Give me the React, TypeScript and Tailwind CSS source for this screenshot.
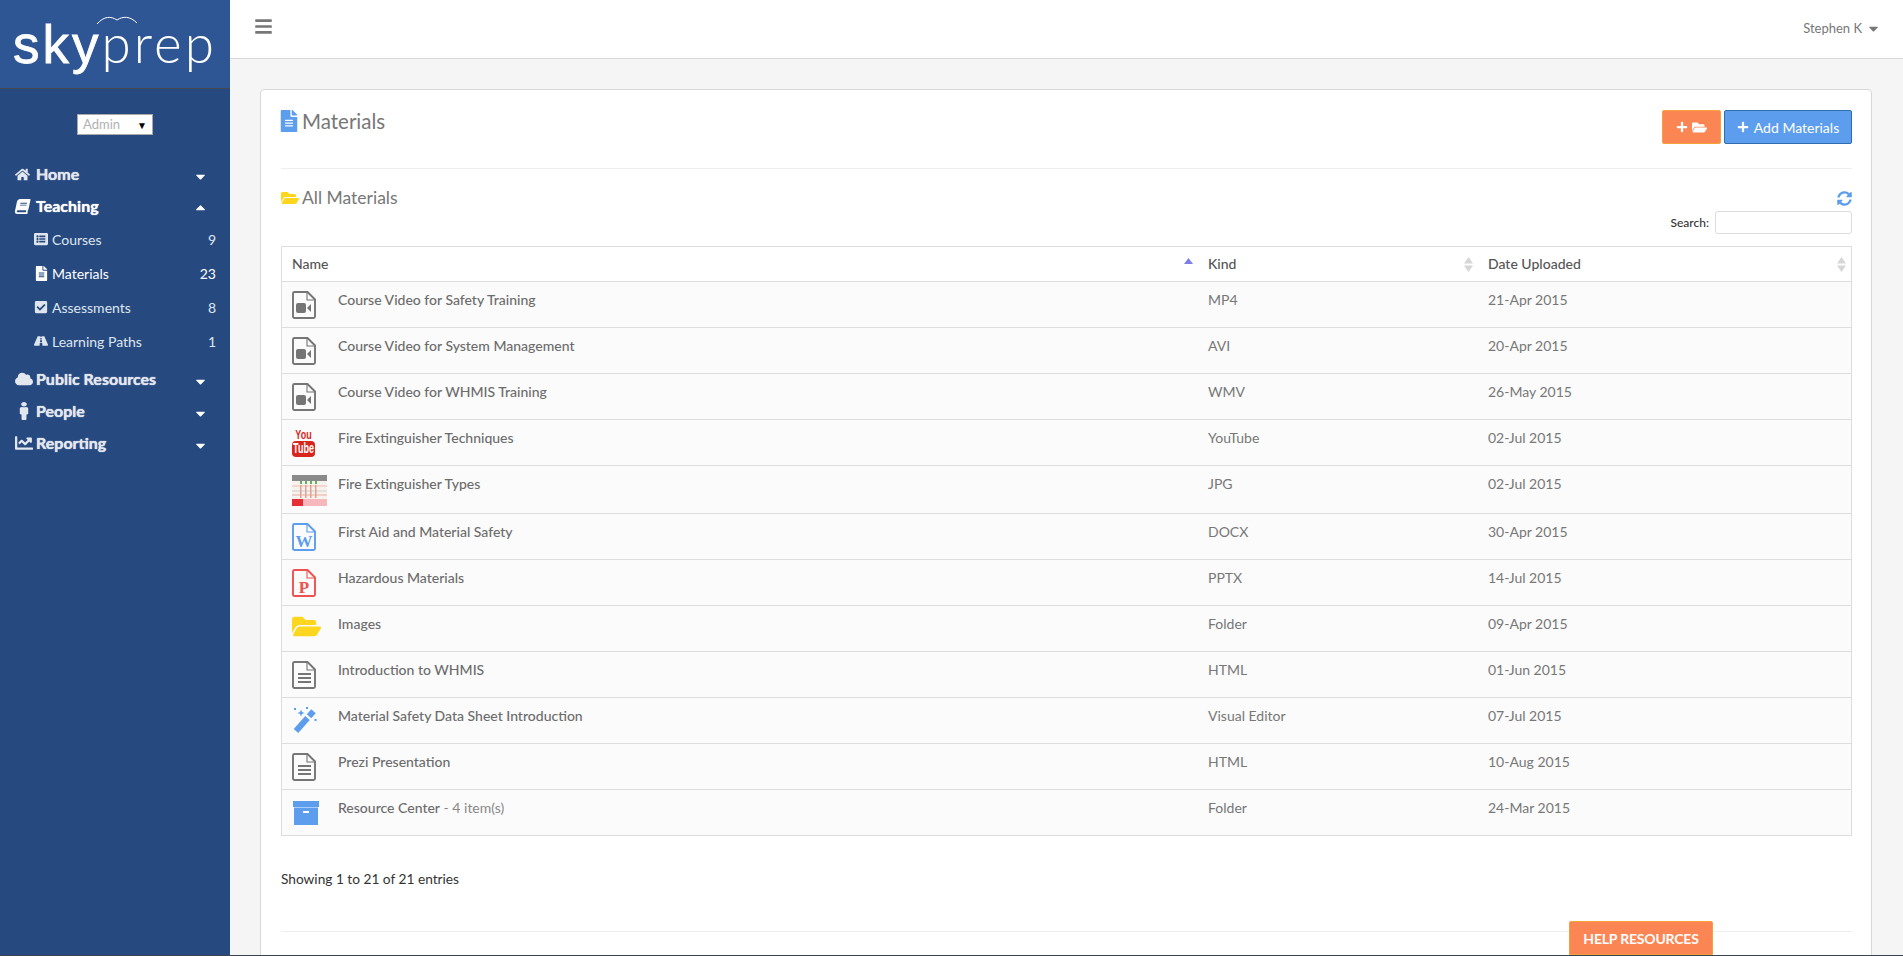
import { ReactNode } from 'react';
import {
  FaBars,
  FaBook,
  FaCaretDown,
  FaCaretUp,
  FaChartLine,
  FaCheckSquare,
  FaCloud,
  FaFileAlt,
  FaFolderOpen,
  FaHome,
  FaListAlt,
  FaMale,
  FaPlus,
  FaRoad,
  FaSyncAlt,
} from 'react-icons/fa';

// outlined page with a folded corner, the glyph inside goes in children
function FileIcon({ color, children }: { color: string; children?: ReactNode }) {
  return (
    <svg width="24" height="28" viewBox="0 0 24 28">
      <path d="M2.5 1 H15.5 L23 8.5 V25.5 a1.5 1.5 0 0 1 -1.5 1.5 H2.5 a1.5 1.5 0 0 1 -1.5 -1.5 V2.5 a1.5 1.5 0 0 1 1.5 -1.5 Z" fill="none" stroke={color} strokeWidth="1.9" />
      <path d="M15 1 V9 H23" fill="none" stroke={color} strokeWidth="1.1" />
      {children}
    </svg>
  );
}

function VideoFile() {
  return (
    <FileIcon color="#757575">
      <rect x="4" y="12" width="10" height="10" rx="2" fill="#757575" />
      <polygon points="15,17 19,13 19,21" fill="#757575" />
    </FileIcon>
  );
}

function TextFile() {
  return (
    <FileIcon color="#757575">
      <rect x="6" y="12" width="13" height="2" fill="#757575" />
      <rect x="6" y="16" width="13" height="2" fill="#757575" />
      <rect x="6" y="20" width="13" height="2" fill="#757575" />
    </FileIcon>
  );
}

function LetterFile({ color, letter }: { color: string; letter: string }) {
  return (
    <FileIcon color={color}>
      <text x="12" y="24" textAnchor="middle" fontSize="17" fontWeight="700" fill={color} fontFamily="Liberation Serif, serif">{letter}</text>
    </FileIcon>
  );
}

// stacked old-style logo, the package only has the play button one
function YoutubeIcon() {
  return (
    <svg width="23" height="28" viewBox="0 0 23 28" className="overflow-visible">
      <text transform="translate(11.5,9.5) scale(1,1.5)" textAnchor="middle" fontSize="9" fontWeight="700" fill="#d9261c" fontFamily="Liberation Sans, sans-serif">You</text>
      <rect x="0" y="12" width="23" height="16" rx="4" fill="#d9261c" />
      <text transform="translate(11.5,24) scale(1,1.6)" textAnchor="middle" fontSize="9" fontWeight="700" fill="#fff" fontFamily="Liberation Sans, sans-serif">Tube</text>
    </svg>
  );
}

// tiny screenshot of a spreadsheet
function SheetThumb() {
  const cols = [8, 13, 18, 23];
  return (
    <svg width="35" height="31" viewBox="0 0 35 31">
      <rect x="0" y="0" width="35" height="31" fill="#f8f2ee" />
      <rect x="0" y="0" width="35" height="6" fill="#8a8a8a" />
      <rect x="0" y="10" width="35" height="2" fill="#f2d9cc" />
      <rect x="0" y="15" width="35" height="2" fill="#e6e0dc" />
      <rect x="0" y="19" width="35" height="2" fill="#f0d0c4" />
      {cols.map(x => (
        <g key={x}>
          <rect x={x} y="6" width="2" height="3" fill="#62b062" />
          <rect x={x} y="10" width="1.5" height="13" fill="#dfa294" />
        </g>
      ))}
      <rect x="0" y="24" width="35" height="7" fill="#f6b8bc" />
      <rect x="0" y="24" width="11" height="7" fill="#e52e35" />
    </svg>
  );
}

function WandIcon() {
  return (
    <svg width="25" height="26" viewBox="0 0 25 26">
      <path d="M4 24 L15.5 11" stroke="#5c9ded" strokeWidth="6" />
      <path d="M17 9.3 L21.5 4.3" stroke="#5c9ded" strokeWidth="6" />
      <polygon points="9,2.5 10,5 12.5,6 10,7 9,9.5 8,7 5.5,6 8,5" fill="#5c9ded" />
      <rect x="2" y="1" width="2" height="2" fill="#5c9ded" />
      <rect x="14" y="0" width="2" height="2" fill="#5c9ded" />
      <rect x="22.5" y="12" width="2" height="2" fill="#5c9ded" />
    </svg>
  );
}

function ArchiveIcon() {
  return (
    <svg width="26" height="24" viewBox="0 0 26 24" className="mt-[2px] ml-[1px]">
      <rect x="0" y="0" width="26" height="6" fill="#5c9ded" />
      <rect x="1" y="6.5" width="24" height="17.5" fill="#5c9ded" />
      <rect x="10" y="10" width="6" height="2" fill="#fff" />
    </svg>
  );
}

function SortUp() {
  return (
    <svg width="9" height="6" viewBox="0 0 9 6">
      <polygon points="4.5,0 9,6 0,6" fill="#7c7fe0" />
    </svg>
  );
}

function SortArrows() {
  return (
    <svg width="9" height="15" viewBox="0 0 9 15">
      <polygon points="4.5,0 9,6.5 0,6.5" fill="#d6d6d6" />
      <polygon points="0,8.5 9,8.5 4.5,15" fill="#d6d6d6" />
    </svg>
  );
}

interface Row {
  name: string;
  extra?: string;
  kind: string;
  date: string;
  icon: ReactNode;
  tall?: boolean;
}

const rows: Row[] = [
  { name: 'Course Video for Safety Training', kind: 'MP4', date: '21-Apr 2015', icon: <VideoFile /> },
  { name: 'Course Video for System Management', kind: 'AVI', date: '20-Apr 2015', icon: <VideoFile /> },
  { name: 'Course Video for WHMIS Training', kind: 'WMV', date: '26-May 2015', icon: <VideoFile /> },
  { name: 'Fire Extinguisher Techniques', kind: 'YouTube', date: '02-Jul 2015', icon: <YoutubeIcon /> },
  { name: 'Fire Extinguisher Types', kind: 'JPG', date: '02-Jul 2015', icon: <SheetThumb />, tall: true },
  { name: 'First Aid and Material Safety', kind: 'DOCX', date: '30-Apr 2015', icon: <LetterFile color="#5c9ded" letter="W" /> },
  { name: 'Hazardous Materials', kind: 'PPTX', date: '14-Jul 2015', icon: <LetterFile color="#f05050" letter="P" /> },
  { name: 'Images', kind: 'Folder', date: '09-Apr 2015', icon: <FaFolderOpen className="text-[#ffd61e] text-[29px] -mt-[3px]" /> },
  { name: 'Introduction to WHMIS', kind: 'HTML', date: '01-Jun 2015', icon: <TextFile /> },
  { name: 'Material Safety Data Sheet Introduction', kind: 'Visual Editor', date: '07-Jul 2015', icon: <WandIcon /> },
  { name: 'Prezi Presentation', kind: 'HTML', date: '10-Aug 2015', icon: <TextFile /> },
  { name: 'Resource Center', extra: ' - 4 item(s)', kind: 'Folder', date: '24-Mar 2015', icon: <ArchiveIcon /> },
];

function MainLink({ icon, label }: { icon: ReactNode; label: string }) {
  return (
    <div className="flex items-center h-8 pl-[15px] pr-[22px] text-[#e3e7ee]">
      <span className="w-[21px] text-[15px] flex">{icon}</span>
      <span className="flex-1 text-[16px] font-bold [text-shadow:0_0_1px_#fff]">{label}</span>
      <FaCaretDown className="text-[15px] text-white mt-[4px]" />
    </div>
  );
}

function SubLink({ icon, label, count, active }: { icon: ReactNode; label: string; count: number; active?: boolean }) {
  return (
    <div className={`flex items-center h-[34px] pl-[34px] pr-[14px] text-[14px] ${active ? 'text-white' : 'text-[#dfe5ee]'}`}>
      <span className="w-[18px] flex">{icon}</span>
      <span className="flex-1">{label}</span>
      <span>{count}</span>
    </div>
  );
}

export default function App() {
  return (
    <div className="flex h-[956px] overflow-hidden bg-[#f5f5f5] font-['Lato','Noto_Sans',sans-serif] text-[14px] border-b border-[#3a4450]">
      {/* Sidebar */}
      <aside className="w-[230px] shrink-0 bg-[#264a80]">
        <div className="h-[89px] bg-[#2f5694] border-b border-[#43484f] flex justify-center relative">
          <svg className="absolute left-[96px] top-[15px]" width="42" height="10" viewBox="0 0 42 10" fill="none" stroke="#fff" strokeWidth="1">
            <path d="M1 9 C8 1 15 1 21 5 C27 1 34 1 41 8" />
          </svg>
          <div className="text-white text-[53px] leading-none mt-[16px] whitespace-nowrap">
            <span className="font-normal font-['Liberation_Sans',sans-serif] tracking-[3px] [-webkit-text-stroke:0.8px_#fff]">sky</span>
            <span className="font-light tracking-[3px]">prep</span>
          </div>
        </div>

        <div className="flex justify-center pt-[25px] pb-[23px]">
          <div className="w-[76px] h-[21px] bg-white border border-[#a9a9a9] flex items-center justify-between pl-[5px] pr-[5px] text-[13px] text-[#b0b0b0] leading-none">
            <span>Admin</span>
            <span className="text-black text-[10px]">▼</span>
          </div>
        </div>

        <MainLink icon={<FaHome />} label="Home" />
        <div className="flex items-center h-8 pl-[15px] pr-[22px] text-white">
          <span className="w-[21px] text-[15px] flex"><FaBook className="-skew-x-12" /></span>
          <span className="flex-1 text-[16px] font-bold [text-shadow:0_0_1px_#fff]">Teaching</span>
          <FaCaretUp className="text-[15px] mt-[3px]" />
        </div>
        <div className="pb-[5px]">
          <SubLink icon={<FaListAlt className="text-[14px]" />} label="Courses" count={9} />
          <SubLink icon={<FaFileAlt className="text-[15px]" />} label="Materials" count={23} active />
          <SubLink icon={<FaCheckSquare className="text-[14px]" />} label="Assessments" count={8} />
          <SubLink icon={<FaRoad className="text-[14px]" />} label="Learning Paths" count={1} />
        </div>
        <MainLink icon={<FaCloud className="text-[18px]" />} label="Public Resources" />
        <MainLink icon={<FaMale className="text-[18px] scale-x-125" />} label="People" />
        <MainLink icon={<FaChartLine className="text-[18px]" />} label="Reporting" />
      </aside>

      {/* Main */}
      <div className="flex-1 min-w-0">
        <header className="h-[59px] bg-white border-b border-[#d8d8d8] flex items-center justify-between pl-[24px] pr-[22px]">
          <FaBars className="text-[#777] text-[19px] -mt-[5px]" />
          <div className="flex items-center gap-[4px] text-[13px] text-[#777] -mt-[1px]">
            <span>Stephen K</span>
            <FaCaretDown className="text-[15px]" />
          </div>
        </header>

        <main className="pl-[30px] pr-[31px] pt-[30px]">
          <div className="bg-white border border-[#d8d8d8] rounded-[4px] pl-[20px] pr-[19px] h-[900px]">
            <div className="flex justify-between border-b border-[#eeeeee] h-[79px]">
              <h1 className="flex items-center gap-[2px] h-[16px] mt-[23px] text-[20.5px] text-[#777] font-normal">
                <FaFileAlt className="text-[#5c9ded] text-[22px] -ml-[3px]" />
                Materials
              </h1>
              <div className="flex gap-[3px] mt-[20px] h-[34px]">
                <button className="w-[59px] bg-[#fb8553] border border-[#f5a13c] rounded-[2px] flex items-center justify-center gap-[4px] text-white text-[14px]">
                  <FaPlus className="text-[12px]" />
                  <FaFolderOpen className="text-[15px]" />
                </button>
                <button className="w-[128px] bg-[#5c9ded] border border-[#2e6dae] rounded-[2px] flex items-center justify-center gap-[5px] text-white text-[14px]">
                  <FaPlus className="text-[12px]" />
                  Add Materials
                </button>
              </div>
            </div>

            <div className="flex justify-between mt-[20px]">
              <h2 className="flex items-center gap-[3px] h-[16px] mt-[1px] text-[17.5px] text-[#777] font-normal">
                <FaFolderOpen className="text-[#ffd61e] text-[18px]" />
                All Materials
              </h2>
              <FaSyncAlt className="text-[#5c9ded] text-[15px] mt-[2px]" />
            </div>

            <div className="flex justify-end items-center gap-[6px] mt-[5px] h-[23px] text-[12px] font-medium text-[#333]">
              <span>Search:</span>
              <input className="w-[137px] h-[23px] border border-[#dddddd] rounded-[3px] bg-white" />
            </div>

            <div className="mt-[12px] border border-[#dddddd] text-[#777]">
              <div className="grid grid-cols-[922px_281px_1fr] h-[34px] items-center text-[14px] text-[#555] font-medium">
                <div className="flex items-center justify-between pl-[10px] pr-[11px]">
                  <span className="-mt-[1px]">Name</span>
                  <span className="-mt-[6px] flex"><SortUp /></span>
                </div>
                <div className="flex items-center justify-between pl-[4px] pr-[12px]">
                  <span className="-mt-[1px]">Kind</span>
                  <SortArrows />
                </div>
                <div className="flex items-center justify-between pl-[3px] pr-[5px]">
                  <span className="-mt-[1px]">Date Uploaded</span>
                  <SortArrows />
                </div>
              </div>
              {rows.map(r => (
                <div
                  key={r.name}
                  className={`grid grid-cols-[922px_281px_1fr] border-t border-[#dddddd] bg-[#fbfbfb] ${r.tall ? 'h-[48px]' : 'h-[46px]'}`}
                >
                  <div className="flex pl-[10px]">
                    <span className="w-[46px] pt-[9px] flex items-start">{r.icon}</span>
                    <span className="pt-[7px] text-[14px] font-medium text-[#6c6c6c]">
                      {r.name}
                      {r.extra && <span className="font-normal text-[#888]">{r.extra}</span>}
                    </span>
                  </div>
                  <div className="pl-[4px] pt-[7px]">{r.kind}</div>
                  <div className="pl-[3px] pt-[7px]">{r.date}</div>
                </div>
              ))}
            </div>

            <p className="mt-[33px] text-[13.7px] text-[#333]">Showing 1 to 21 of 21 entries</p>
            <div className="mt-[41px] border-t border-[#eeeeee]" />
          </div>
        </main>
      </div>

      {/* Help tab sits on top of the page edge */}
      <button className="absolute left-[1569px] top-[921px] w-[144px] h-[34px] bg-[#fb8553] border border-[#f5a13c] rounded-t-[2px] text-white font-bold text-[14px] tracking-[-0.2px]">
        HELP RESOURCES
      </button>
    </div>
  );
}
